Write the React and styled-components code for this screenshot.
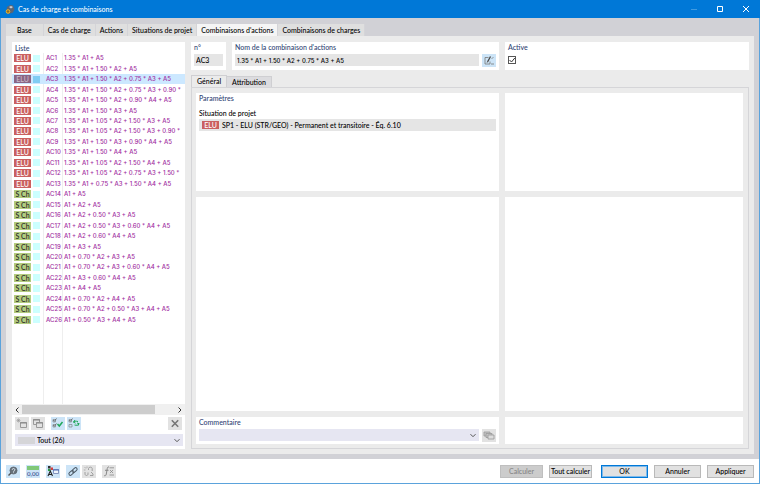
import React from "react";
import styled, { createGlobalStyle, css } from "styled-components";

const Global = createGlobalStyle`
  * { box-sizing: border-box; }
  html, body { margin: 0; height: 100%; }
  #root { height: 100%; }
  body, button, input, select {
    font-family: Lato, "Open Sans", sans-serif;
    font-size: 7px;
    font-weight: 500;
    color: #000;
  }
  button, input, select { margin: 0; padding: 0; border: 0; border-radius: 0; }
`;

const formulaFont = css`
  font-family: Inter, "Noto Sans", sans-serif;
  font-size: 6px;
  font-weight: 500;
`;

const Window = styled.div`
  display: flex;
  flex-direction: column;
  min-height: 100vh;
  background: #d1d1d6;
  border: 1px solid #5ba3dc;
  border-width: 0 1px 1px;
`;

const TitleBar = styled.header`
  display: flex;
  align-items: center;
  height: 18px;
  margin: 0 -1px;
  padding: 0 10px 0 5px;
  gap: 3px;
  background: #0078d7;
  color: #fff;
`;

const Title = styled.h1`
  flex: 1;
  margin: 0;
  font-size: 7px;
  font-weight: 500;
`;

const WindowControls = styled.div`
  display: flex;
  gap: 18px;
`;

const ControlButton = styled.button`
  display: flex;
  width: 8px;
  height: 8px;
  background: none;
  color: #fff;
  opacity: ${(p) => (p.disabled ? 0.25 : 1)};
`;

const Body = styled.main`
  flex: 1;
  display: flex;
  flex-direction: column;
  padding: 6px 5px 5px;
`;

const Tabs = styled.nav`
  display: flex;
`;

const Tab = styled.button`
  height: 12px;
  padding: 0 4px;
  line-height: 12px;
  border-right: 1px solid #d4d4d8;
  background: #dfdfdf;
  white-space: nowrap;
  ${(p) => p.$wide && css`padding: 0 11px;`}
  ${(p) => p.$active && css`background: #f5f5f5;`}
`;

const Page = styled.div`
  flex: 1;
  display: grid;
  grid-template-columns: 173px minmax(0, 1fr);
  gap: 6px;
  padding: 6px 5px 5px 6px;
  background: #ebebeb;
`;

const Panel = styled.section`
  min-width: 0;
  padding: 1px 3px 3px;
  background: #fff;
`;

const Heading = styled.h2`
  display: block;
  margin: 0;
  height: 9px;
  line-height: 9px;
  font-size: 7px;
  font-weight: 500;
  color: #2f4474;
`;

const ListPanel = styled(Panel)`
  display: flex;
  flex-direction: column;
  padding: 1px 0 3px;
  & > ${Heading} { height: 10px; padding-left: 3px; line-height: 10px; }
`;

const ListArea = styled.div`
  flex: 1;
  overflow: hidden;
  background: linear-gradient(#eee, #eee) 31px 0 / 1px 100% no-repeat,
    linear-gradient(#eee, #eee) 50px 0 / 1px 100% no-repeat;
`;

const CaseTable = styled.table`
  display: block;
  width: 100%;
`;

const CaseBody = styled.tbody`
  display: grid;
  grid-template-rows: repeat(26, 1fr);
  height: 272px;
`;

const CaseRow = styled.tr`
  display: grid;
  grid-template-columns: 19px 13px 18px minmax(0, 1fr);
  align-items: center;
  padding-left: 2px;
  color: #a02ca0;
  background: ${(p) => (p.$selected ? "#cce8ff" : "none")};
`;

const Cell = styled.td`
  padding: 0;
  line-height: 10px;
  white-space: nowrap;
  ${(p) => p.$formula && formulaFont}
`;

const Badge = styled.span`
  display: block;
  width: 17px;
  height: 8px;
  line-height: 8px;
  text-align: center;
  color: ${(p) => (p.$kind === "ELU" ? "#fff" : "#222")};
  background: ${(p) => (p.$kind === "ELU" ? "#ca6060" : "#b3cc80")};
  ${(p) => p.$selected && css`background: #8a6584; color: #c9bccb;`}
`;

const Swatch = styled.span`
  display: block;
  width: 7px;
  height: 7px;
  background: ${(p) => (p.$selected ? "#80cdf3" : "#ccffff")};
`;

const ScrollBar = styled.div`
  display: flex;
  align-items: center;
  justify-content: space-between;
  height: 11px;
  padding: 1px 3px;
  background: #f0f0f0;
`;

const ScrollTrack = styled.div`
  flex: 1;
  height: 9px;
  margin: 0 3px;
`;

const ScrollThumb = styled.div`
  width: 87%;
  height: 100%;
  background: #cdcdcd;
`;

const Toolbar = styled.div`
  display: flex;
  gap: 2px;
  padding: 2px 3px 4px;
`;

const IconButton = styled.button`
  display: flex;
  flex: none;
  align-items: center;
  justify-content: center;
  width: 14px;
  height: 13px;
  margin-left: ${(p) => (p.$apart ? "4px" : p.$end ? "auto" : "0")};
  background: ${(p) => (p.$on ? "#cce4f7" : "#e2e2e2")};
`;

const SelectBox = styled.div`
  display: grid;
  flex: 1;
  align-items: center;
  height: 12px;
  background: #e6e6f2;
  & > * { grid-area: 1 / 1; }
  & > svg { justify-self: end; margin-right: 3px; pointer-events: none; }
`;

const FilterRow = styled.div`
  display: flex;
  padding: 0 2px 0 3px;
`;

const Select = styled.select`
  width: 100%;
  height: 12px;
  padding-left: ${(p) => (p.$swatch ? "22px" : "3px")};
  appearance: none;
  background: none;
`;

const SelectSwatch = styled.span`
  width: 17px;
  height: 7px;
  margin-left: 3px;
  background: #d5d5d8;
`;

const Detail = styled.div`
  display: flex;
  flex-direction: column;
  min-width: 0;
`;

const HeaderRow = styled.div`
  display: grid;
  grid-template-columns: 35px minmax(0, 267fr) minmax(0, 244fr);
  gap: 6px;
  height: 27px;
  margin-bottom: 6px;
`;

const FieldRow = styled.div`
  display: flex;
  gap: 3px;
  padding-top: 2px;
`;

const TextField = styled.input`
  flex: 1;
  min-width: 0;
  width: 100%;
  height: 12px;
  padding: 0 2px;
  background: #e5e5e5;
  ${(p) => p.$formula && formulaFont}
`;

const CheckWrap = styled.div`
  display: grid;
  justify-content: start;
  padding-top: 4px;
  & > * { grid-area: 1 / 1; }
  & > svg { pointer-events: none; }
`;

const CheckBox = styled.input`
  appearance: none;
  width: 8px;
  height: 8px;
  margin: 0;
  border: 1px solid #555;
  background: #fff;
`;

const InnerTabs = styled.div`
  display: flex;
  align-items: flex-end;
`;

const InnerTab = styled.button`
  height: 12px;
  padding: 0 5px;
  border: 1px solid #cfcfd2;
  border-width: 1px 1px 0;
  line-height: 11px;
  background: ${(p) => (p.$active ? "#ebebeb" : "#dcdcdf")};
  & + & { border-left: 0; height: 11px; }
`;

const TabPanel = styled.div`
  flex: 1;
  display: grid;
  grid-template-columns: minmax(0, 303fr) minmax(0, 238fr);
  grid-template-rows: 98px minmax(0, 1fr) 27px;
  gap: 6px;
  padding: 5px 5px 4px 4px;
  border: 1px solid #d5d5d8;
`;

const FieldLabel = styled.div`
  margin-top: 5px;
  line-height: 10px;
`;

const Situation = styled.div`
  display: flex;
  align-items: center;
  gap: 3px;
  height: 12px;
  margin-top: 1px;
  padding-left: 3px;
  white-space: nowrap;
  background: #e5e5e5;
`;

const Footer = styled.footer`
  display: flex;
  align-items: center;
  justify-content: space-between;
  height: 24px;
  padding: 0 5px;
  background: #fff;
`;

const ToolGroup = styled.div`
  display: flex;
  gap: 6px;
`;

const ToolPair = styled.div`
  display: flex;
  gap: 2px;
`;

const Actions = styled.div`
  display: flex;
  gap: 6px;
`;

const Action = styled.button`
  width: ${(p) => (p.$narrow ? "43px" : "47px")};
  height: 13px;
  border: 1px solid #b9b9b9;
  background: #e1e1e1;
  line-height: 11px;
  white-space: nowrap;
  ${(p) => p.$primary && css`
    margin-left: 3px;
    border-color: #0078d7;
    box-shadow: inset 0 0 0 1px #7db9ea;
  `}
  &:disabled { background: #cccccc; border-color: #bfbfbf; color: #858585; }
`;

const Svg = ({ w = 12, h = 11, children }) => (
  <svg width={w} height={h} viewBox={`0 0 ${w} ${h}`} fill="none" stroke="#555" strokeWidth="1" aria-hidden="true">
    {children}
  </svg>
);

const Chevron = () => (
  <Svg w={6} h={5}><path d="M.5 1.2 3 3.7 5.5 1.2" /></Svg>
);

const icons = {
  create: (
    <Svg>
      <path stroke="#999" strokeWidth="1" d="M4.500 4.500h6v5h-6z" />
      <path stroke="#858585" strokeWidth="1" d="M4 5h7" />
      <path stroke="#999" strokeWidth=".6" d="M2.500.5v4M.5 2.500h4M1 1l3 3M4 1 1 4" />
    </Svg>
  ),
  copy: (
    <Svg>
      <path stroke="#999" d="M1.500 1.500h6v5h-6z" />
      <path stroke="#858585" d="M1 2h7" />
      <path stroke="#999" fill="#e2e2e2" d="M4.500 4.500h6v5h-6z" />
      <path stroke="#858585" d="M4 5h7" />
    </Svg>
  ),
  check: (
    <Svg>
      <g stroke="#777" strokeWidth=".6"><path d="M1 1.500h2.500V4H1zM1 6.500h2.500V9H1z" /></g>
      <path strokeWidth=".8" d="M1.200 2.200 2.300 3.300 4.500.5M1.200 7.200l1.100 1.100L4.500 5.500" />
      <path stroke="#1fa85a" strokeWidth="1.500" d="m5.500 6 1.800 2L10.500 4" />
    </Svg>
  ),
  swap: (
    <Svg>
      <g stroke="#777" strokeWidth=".6"><path d="M1 1.500h2.500V4H1zM1 6.500h3V9H1z" /></g>
      <path strokeWidth=".8" d="M1.200 2.200 2.300 3.300 4.500.5" />
      <path stroke="#1fa85a" strokeWidth="1" d="M5.500 4.500C6 3 8 3 10 3.500M7 2 5.500 4 7.500 5.200M11 5.500C10.500 7.500 8.500 7.500 6.500 7M9 5l2 .7-1 2" />
    </Svg>
  ),
  remove: <Svg><path stroke="#777" strokeWidth="1.600" d="m2.800 2.300 6.400 6.400m0-6.400L2.800 8.700" /></Svg>,
  edit: (
    <Svg>
      <path stroke="#777" strokeWidth=".8" d="M5.500 2.500H2v6.500h5V6.500M8 9h3" />
      <path stroke="#444" strokeWidth="1.300" d="M4.500 7 7.500 1.500" />
      <path stroke="#777" strokeWidth=".7" d="M8.500 4 10.500 2M4 8l.5-1.500" />
    </Svg>
  ),
  cards: (
    <Svg>
      <g stroke="#999" strokeWidth=".8">
        <path d="M1 2h6v4H1z" fill="#c4c4c4" />
        <path d="M3 3.500h6v4H3z" fill="#c4c4c4" />
        <path d="M5 5h6v4H5z" fill="#ddd" />
      </g>
    </Svg>
  ),
  help: (
    <Svg>
      <circle cx="6.500" cy="4.500" r="3.600" fill="#667079" stroke="#555f68" strokeWidth=".6" />
      <path d="m4 7-2.500 2.500" strokeWidth="1.500" />
      <path stroke="#e4f0fa" strokeWidth=".9" d="M5.200 3.800c0-1.800 2.700-1.600 2.700 0 0 1-1.400.9-1.400 2m0 .6v.7" />
    </Svg>
  ),
  tree: (
    <Svg>
      <path fill="#333" stroke="none" d="M1 0h2.500v2.500H1z" />
      <path fill="#d43d3d" stroke="none" d="M3.500 1.500H6V4H3.500z" />
      <path fill="#299c45" stroke="none" d="M1 3h2.500v2H1z" />
      <path stroke="#222" strokeWidth="1.100" d="m1 10 2.300-5L5.500 10M2 8.500h3" />
      <path stroke="#6c7fae" strokeWidth=".8" fill="#eef4fb" d="M6.500 3.500h5v4h-5z" />
      <path stroke="#4667b3" d="M6 4h6" />
    </Svg>
  ),
  link: (
    <Svg>
      <g stroke="#4c5a66" strokeWidth="1" transform="rotate(-42 6 5.500)">
        <rect x="1" y="4" width="5.700" height="3" rx="1.500" />
        <rect x="5.300" y="4" width="5.700" height="3" rx="1.500" />
      </g>
    </Svg>
  ),
  unlink: (
    <Svg>
      <g stroke="#999" strokeWidth=".9">
        <path d="M5.500 4V2.500c0-1.800 3.700-1.800 3.700 0V5M2 6v2c0 2 3 2 3 0V6.500M8 6l2 2v1.500H7" />
        <path strokeWidth=".7" d="m1.500 1 1.500 1.500M4 .5v1.500M.8 4h1.700" />
      </g>
    </Svg>
  ),
  fx: (
    <Svg>
      <g stroke="#888" strokeWidth="1">
        <path d="M6 1C4.500.5 4.300 2 4 4L3.300 8C3 10 2 10 1 9.500M2 4.300h3.500" />
        <path strokeWidth=".8" d="M6.500 1.800H11M7 4l3 3m0-3L7 7M6.500 9H11" />
      </g>
    </Svg>
  ),
};

const UnitIcon = styled.span`
  width: 12px;
  height: 11px;
  border-top: 4px solid #80c878;
  color: #34468a;
  font-size: 6px;
  line-height: 7px;
  text-align: center;
`;

const cases = [
  "1.35 * A1 + A5", "1.35 * A1 + 1.50 * A2 + A5", "1.35 * A1 + 1.50 * A2 + 0.75 * A3 + A5",
  "1.35 * A1 + 1.50 * A2 + 0.75 * A3 + 0.90 *", "1.35 * A1 + 1.50 * A2 + 0.90 * A4 + A5",
  "1.35 * A1 + 1.50 * A3 + A5", "1.35 * A1 + 1.05 * A2 + 1.50 * A3 + A5",
  "1.35 * A1 + 1.05 * A2 + 1.50 * A3 + 0.90 *", "1.35 * A1 + 1.50 * A3 + 0.90 * A4 + A5",
  "1.35 * A1 + 1.50 * A4 + A5", "1.35 * A1 + 1.05 * A2 + 1.50 * A4 + A5",
  "1.35 * A1 + 1.05 * A2 + 0.75 * A3 + 1.50 *", "1.35 * A1 + 0.75 * A3 + 1.50 * A4 + A5",
  "A1 + A5", "A1 + A2 + A5", "A1 + A2 + 0.50 * A3 + A5", "A1 + A2 + 0.50 * A3 + 0.60 * A4 + A5",
  "A1 + A2 + 0.60 * A4 + A5", "A1 + A3 + A5", "A1 + 0.70 * A2 + A3 + A5",
  "A1 + 0.70 * A2 + A3 + 0.60 * A4 + A5", "A1 + A3 + 0.60 * A4 + A5", "A1 + A4 + A5",
  "A1 + 0.70 * A2 + A4 + A5", "A1 + 0.70 * A2 + 0.50 * A3 + A4 + A5", "A1 + 0.50 * A3 + A4 + A5",
].map((formula, i) => ({ formula, id: `AC${i + 1}`, kind: i < 13 ? "ELU" : "S Ch" }));

export default function App() {
  return (
    <>
      <Global />
      <Window>
        <TitleBar>
          <svg width="10" height="11" viewBox="0 0 10 11" aria-hidden="true">
            <path d="M2 3 5 1l3 .5L9.500 5 8 8.500 4 10 1.500 6z" fill="#5d6673" />
            <path d="m4 3 2-1 2 1-2 1.500z" fill="#c9ced6" />
            <circle cx="3" cy="7.500" r="1.800" fill="#8a6d2a" stroke="#f2b52b" strokeWidth="1" />
          </svg>
          <Title>Cas de charge et combinaisons</Title>
          <WindowControls>
            <ControlButton aria-label="Réduire" disabled><Svg w={8} h={8}><path stroke="#fff" d="M1 4.500h6" /></Svg></ControlButton>
            <ControlButton aria-label="Agrandir"><Svg w={8} h={8}><path stroke="#fff" d="M1.500 1.500h5v5h-5z" /></Svg></ControlButton>
            <ControlButton aria-label="Fermer"><Svg w={8} h={8}><path stroke="#fff" d="m1 1 6 6m0-6L1 7" /></Svg></ControlButton>
          </WindowControls>
        </TitleBar>
        <Body>
          <Tabs>
            <Tab $wide>Base</Tab>
            <Tab>Cas de charge</Tab>
            <Tab>Actions</Tab>
            <Tab>Situations de projet</Tab>
            <Tab $active>Combinaisons d'actions</Tab>
            <Tab>Combinaisons de charges</Tab>
          </Tabs>
          <Page>
            <ListPanel>
              <Heading>Liste</Heading>
              <ListArea>
                <CaseTable aria-label="Liste">
                  <CaseBody>
                    {cases.map(({ id, kind, formula }) => {
                      const selected = id === "AC3";
                      return (
                        <CaseRow key={id} $selected={selected}>
                          <Cell><Badge $kind={kind} $selected={selected}>{kind}</Badge></Cell>
                          <Cell><Swatch $selected={selected} /></Cell>
                          <Cell $formula>{id}</Cell>
                          <Cell $formula>{formula}</Cell>
                        </CaseRow>
                      );
                    })}
                  </CaseBody>
                </CaseTable>
              </ListArea>
              <ScrollBar>
                <Svg w={4} h={6}><path stroke="#333" d="M3.500.5 1 3l2.500 2.500" /></Svg>
                <ScrollTrack><ScrollThumb /></ScrollTrack>
                <Svg w={4} h={6}><path stroke="#333" d="M.5.5 3 3 .5 5.500" /></Svg>
              </ScrollBar>
              <Toolbar>
                <IconButton aria-label="Nouveau">{icons.create}</IconButton>
                <IconButton aria-label="Copier">{icons.copy}</IconButton>
                <IconButton $on $apart aria-label="Tout sélectionner">{icons.check}</IconButton>
                <IconButton $on aria-label="Inverser la sélection">{icons.swap}</IconButton>
                <IconButton $end aria-label="Supprimer">{icons.remove}</IconButton>
              </Toolbar>
              <FilterRow>
                <SelectBox>
                  <SelectSwatch />
                  <Select $swatch aria-label="Filtre"><option>Tout (26)</option></Select>
                  <Chevron />
                </SelectBox>
              </FilterRow>
            </ListPanel>
            <Detail>
              <HeaderRow>
                <Panel>
                  <Heading as="label" htmlFor="number">n°</Heading>
                  <FieldRow><TextField id="number" readOnly value="AC3" /></FieldRow>
                </Panel>
                <Panel>
                  <Heading as="label" htmlFor="name">Nom de la combinaison d'actions</Heading>
                  <FieldRow>
                    <TextField $formula id="name" readOnly value="1.35 * A1 + 1.50 * A2 + 0.75 * A3 + A5" />
                    <IconButton $on aria-label="Modifier le nom">{icons.edit}</IconButton>
                  </FieldRow>
                </Panel>
                <Panel>
                  <Heading as="label" htmlFor="active">Active</Heading>
                  <CheckWrap>
                    <CheckBox id="active" type="checkbox" defaultChecked />
                    <Svg w={8} h={8}><path stroke="#333" d="m1.500 4 2 2L6.800 2" /></Svg>
                  </CheckWrap>
                </Panel>
              </HeaderRow>
              <InnerTabs>
                <InnerTab $active>Général</InnerTab>
                <InnerTab>Attribution</InnerTab>
              </InnerTabs>
              <TabPanel>
                <Panel>
                  <Heading>Paramètres</Heading>
                  <FieldLabel>Situation de projet</FieldLabel>
                  <Situation><Badge $kind="ELU">ELU</Badge>SP1 - ELU (STR/GEO) - Permanent et transitoire - Éq. 6.10</Situation>
                </Panel>
                <Panel />
                <Panel />
                <Panel />
                <Panel>
                  <Heading as="label" htmlFor="comment">Commentaire</Heading>
                  <FieldRow>
                    <SelectBox><Select id="comment" /><Chevron /></SelectBox>
                    <IconButton aria-label="Commentaires">{icons.cards}</IconButton>
                  </FieldRow>
                </Panel>
                <Panel />
              </TabPanel>
            </Detail>
          </Page>
        </Body>
        <Footer>
          <ToolGroup>
            <IconButton $on aria-label="Aide">{icons.help}</IconButton>
            <IconButton $on aria-label="Unités"><UnitIcon>0,00</UnitIcon></IconButton>
            <IconButton $on aria-label="Affichage">{icons.tree}</IconButton>
            <ToolPair>
              <IconButton $on aria-label="Lier">{icons.link}</IconButton>
              <IconButton aria-label="Délier">{icons.unlink}</IconButton>
            </ToolPair>
            <IconButton aria-label="Formule">{icons.fx}</IconButton>
          </ToolGroup>
          <Actions>
            <Action $narrow disabled>Calculer</Action>
            <Action $narrow>Tout calculer</Action>
            <Action $primary>OK</Action>
            <Action>Annuler</Action>
            <Action>Appliquer</Action>
          </Actions>
        </Footer>
      </Window>
    </>
  );
}
